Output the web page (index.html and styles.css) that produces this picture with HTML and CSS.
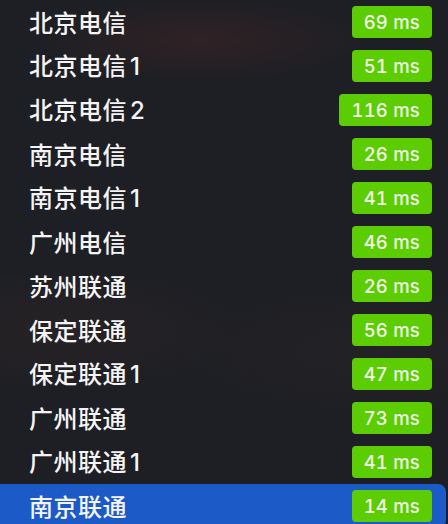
FILE: index.html
```html
<!DOCTYPE html>
<html lang="zh">
<head>
<meta charset="utf-8">
<link rel="stylesheet" href="styles.css">
</head>
<body>
<ul class="list">
  <li class="row"><span class="name">北京电信</span><span class="badge">69 ms</span></li>
  <li class="row"><span class="name">北京电信<span class="num">1</span></span><span class="badge">51 ms</span></li>
  <li class="row"><span class="name">北京电信<span class="num">2</span></span><span class="badge">116 ms</span></li>
  <li class="row"><span class="name">南京电信</span><span class="badge">26 ms</span></li>
  <li class="row"><span class="name">南京电信<span class="num">1</span></span><span class="badge">41 ms</span></li>
  <li class="row"><span class="name">广州电信</span><span class="badge">46 ms</span></li>
  <li class="row"><span class="name">苏州联通</span><span class="badge">26 ms</span></li>
  <li class="row"><span class="name">保定联通</span><span class="badge">56 ms</span></li>
  <li class="row"><span class="name">保定联通<span class="num">1</span></span><span class="badge">47 ms</span></li>
  <li class="row"><span class="name">广州联通</span><span class="badge">73 ms</span></li>
  <li class="row"><span class="name">广州联通<span class="num">1</span></span><span class="badge">41 ms</span></li>
  <li class="row selected"><span class="name">南京联通</span><span class="badge">14 ms</span></li>
</ul>
</body>
</html>
```
FILE: styles.css
```css
html, body {
  margin: 0;
  padding: 0;
}
body {
  width: 448px;
  height: 524px;
  overflow: hidden;
  background-color: #1e1f24;
  background-image:
    radial-gradient(ellipse 160px 40px at 200px 40px, rgba(90, 40, 40, 0.3), rgba(90, 40, 40, 0) 100%),
    radial-gradient(ellipse 180px 60px at 60px 330px, rgba(70, 45, 40, 0.22), rgba(70, 45, 40, 0) 100%),
    radial-gradient(ellipse 200px 60px at 380px 350px, rgba(60, 45, 40, 0.18), rgba(60, 45, 40, 0) 100%);
  font-family: "Noto Sans CJK SC", "Noto Sans", sans-serif;
}
.list {
  list-style: none;
  margin: 0;
  padding: 0;
}
.row {
  height: 44px;
  display: flex;
  align-items: center;
  justify-content: space-between;
  padding: 0 16px 0 29px;
  box-sizing: border-box;
}
.name {
  color: #f4f4f4;
  font-size: 24px;
  font-weight: 500;
  line-height: 1;
  letter-spacing: 0.5px;
}
.num {
  font-family: Inter, "Noto Sans", sans-serif;
  font-weight: 500;
  margin-left: 3px;
}
.badge {
  background: #5ccd02;
  color: #f2f7ea;
  font-family: Inter, "Noto Sans", sans-serif;
  font-size: 18.5px;
  font-weight: 500;
  letter-spacing: 0.2px;
  font-variant-numeric: tabular-nums;
  height: 32px;
  line-height: 32px;
  min-width: 80px;
  text-align: center;
  padding: 0 12px;
  border-radius: 4px;
  box-sizing: border-box;
}
.selected {
  background: #1c5bc7;
  margin-right: 2px;
  padding-right: 14px;
  border-radius: 0 8px 8px 0;
}
```
